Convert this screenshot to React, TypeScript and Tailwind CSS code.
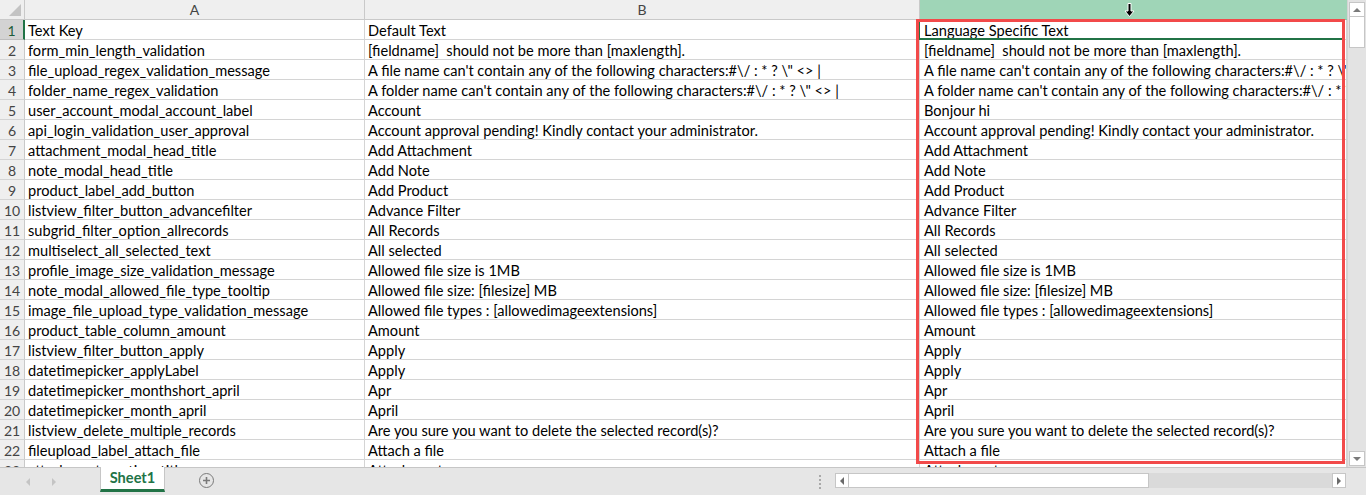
const rows: [string, string, string][] = [
  ['Text Key', 'Default Text', 'Language Specific Text'],
  ['form_min_length_validation', '[fieldname]  should not be more than [maxlength].', '[fieldname]  should not be more than [maxlength].'],
  ['file_upload_regex_validation_message', 'A file name can\'t contain any of the following characters:#\\/ : * ? \\" <> |', 'A file name can\'t contain any of the following characters:#\\/ : * ? \\" <> |'],
  ['folder_name_regex_validation', 'A folder name can\'t contain any of the following characters:#\\/ : * ? \\" <> |', 'A folder name can\'t contain any of the following characters:#\\/ : * ? \\" <> |'],
  ['user_account_modal_account_label', 'Account', 'Bonjour hi'],
  ['api_login_validation_user_approval', 'Account approval pending! Kindly contact your administrator.', 'Account approval pending! Kindly contact your administrator.'],
  ['attachment_modal_head_title', 'Add Attachment', 'Add Attachment'],
  ['note_modal_head_title', 'Add Note', 'Add Note'],
  ['product_label_add_button', 'Add Product', 'Add Product'],
  ['listview_filter_button_advancefilter', 'Advance Filter', 'Advance Filter'],
  ['subgrid_filter_option_allrecords', 'All Records', 'All Records'],
  ['multiselect_all_selected_text', 'All selected', 'All selected'],
  ['profile_image_size_validation_message', 'Allowed file size is 1MB', 'Allowed file size is 1MB'],
  ['note_modal_allowed_file_type_tooltip', 'Allowed file size: [filesize] MB', 'Allowed file size: [filesize] MB'],
  ['image_file_upload_type_validation_message', 'Allowed file types : [allowedimageextensions]', 'Allowed file types : [allowedimageextensions]'],
  ['product_table_column_amount', 'Amount', 'Amount'],
  ['listview_filter_button_apply', 'Apply', 'Apply'],
  ['datetimepicker_applyLabel', 'Apply', 'Apply'],
  ['datetimepicker_monthshort_april', 'Apr', 'Apr'],
  ['datetimepicker_month_april', 'April', 'April'],
  ['listview_delete_multiple_records', 'Are you sure you want to delete the selected record(s)?', 'Are you sure you want to delete the selected record(s)?'],
  ['fileupload_label_attach_file', 'Attach a file', 'Attach a file'],
  ['attachment_section_title', 'Attachment', 'Attachment'],
]

const cell = 'h-[20px] border-r border-b border-[#d4d4d4] pl-[3px] pr-[2px] pt-[1px] overflow-hidden whitespace-pre leading-[20px] text-black bg-white'

function ColHead({ label }: { label: string }) {
  return (
    <div className="h-[20px] flex items-center justify-center border-r border-b bg-[#efefef] border-[#c9c9c9] text-[14px] text-[#444]">
      {label}
    </div>
  )
}

export default function App() {
  return (
    <div className="w-[1366px] h-[495px] overflow-hidden flex flex-col bg-white" style={{ fontFamily: 'Lato, "Noto Sans", sans-serif' }}>
      <div className="flex h-[467px]">
        <div className="relative w-[1347px] overflow-hidden">
          <div className="grid grid-cols-[25px_340px_555px_427px] text-[14.6px]">
            <div className="relative h-[20px] bg-[#efefef] border-r border-b border-[#c9c9c9]">
              <div className="absolute right-[3px] bottom-[3px] w-0 h-0 border-l-[12px] border-l-transparent border-b-[12px] border-b-[#c3c3c3]" />
            </div>
            <ColHead label="A" />
            <ColHead label="B" />
            <div className="h-[20px] flex items-center justify-center bg-[#9fd5b7] border-b border-[#8cc2a4] text-[14px] text-[#9fd5b7]">
              C
            </div>
            {rows.map((r, i) => (
              <div key={i} className="contents">
                <div
                  className={`h-[20px] flex items-center justify-center border-b text-[14px] pt-[1px] ${
                    i === 0
                      ? 'bg-[#d3d3d3] border-[#bdbdbd] text-[#1e5d3a] border-r-2 border-r-[#217346]'
                      : 'bg-[#efefef] border-[#d4d4d4] text-[#444] border-r border-r-[#c9c9c9]'
                  }`}
                >
                  {i + 1}
                </div>
                <div className={cell}>{r[0]}</div>
                <div className={cell}>{r[1]}</div>
                <div className={`${cell} pl-[4px]`}>{r[2]}</div>
              </div>
            ))}
          </div>

          {/* mouse cursor over column C header */}
          <svg className="absolute left-[1124px] top-[3px]" width="11" height="14" viewBox="0 0 11 14">
            <path d="M4 0.5h3v7.5h3L5.5 13.5 1 8h3z" fill="#000" stroke="#fff" strokeWidth="1" />
          </svg>

          {/* active cell C1 */}
          <div className="absolute left-[918px] top-[19px] w-[426px] h-[21px] border-2 border-[#217346] pointer-events-none" />

          {/* red highlight */}
          <div className="absolute left-[916px] top-[19px] w-[429px] h-[445px] border-[3px] border-[#f24a4a] pointer-events-none" />
        </div>

        {/* vertical scrollbar */}
        <div className="w-[19px] bg-[#e3e3e3] border-l border-[#d4d4d4] flex flex-col items-center pt-[2px]">
          <div className="w-[16px] h-[15px] bg-white border border-[#c6c6c6] flex items-center justify-center">
            <div className="w-0 h-0 border-l-[4px] border-r-[4px] border-b-[4px] border-l-transparent border-r-transparent border-b-[#7a7a7a]" />
          </div>
          <div className="w-[16px] h-[31px] bg-white border border-t-0 border-[#c6c6c6]" />
          <div className="flex-1" />
          <div className="w-[16px] h-[15px] bg-white border border-[#c6c6c6] flex items-center justify-center mb-[1px]">
            <div className="w-0 h-0 border-l-[4px] border-r-[4px] border-t-[4px] border-l-transparent border-r-transparent border-t-[#7a7a7a]" />
          </div>
        </div>
      </div>

      {/* sheet tab bar */}
      <div className="h-[28px] bg-[#e6e6e6] border-t border-[#c6c6c6] flex items-start">
        <div className="w-[100px] h-full flex items-center pl-[26px] gap-[22px]">
          <div className="w-0 h-0 border-t-[4px] border-b-[4px] border-r-[4px] border-t-transparent border-b-transparent border-r-[#c4c4c4]" />
          <div className="w-0 h-0 border-t-[4px] border-b-[4px] border-l-[4px] border-t-transparent border-b-transparent border-l-[#c4c4c4]" />
        </div>
        <div className="w-[65px] h-[25px] -mt-px bg-white border-x border-[#c6c6c6] border-b-[3px] border-b-[#217346] flex items-center justify-center text-[14.6px] font-bold text-[#217346]">
          Sheet1
        </div>
        <div className="ml-[34px] mt-[5px] w-[15px] h-[15px] rounded-full border-[1.5px] border-[#7a7a7a] flex items-center justify-center">
          <svg width="9" height="9" viewBox="0 0 9 9">
            <path d="M4.5 1v7M1 4.5h7" stroke="#7a7a7a" strokeWidth="1.6" />
          </svg>
        </div>
        <div className="ml-[605px] mt-[7px] flex flex-col gap-[2px]">
          <div className="w-[2px] h-[2px] bg-[#a9a9a9]" />
          <div className="w-[2px] h-[2px] bg-[#a9a9a9]" />
          <div className="w-[2px] h-[2px] bg-[#a9a9a9]" />
          <div className="w-[2px] h-[2px] bg-[#a9a9a9]" />
        </div>
        <div className="ml-[14px] mt-[5px] flex h-[15px]">
          <div className="w-[14px] h-[15px] bg-white border border-[#c6c6c6] flex items-center justify-center">
            <div className="w-0 h-0 border-t-[4px] border-b-[4px] border-r-[4px] border-t-transparent border-b-transparent border-r-[#6a6a6a]" />
          </div>
          <div className="w-[300px] h-[15px] bg-white border-y border-r border-[#c6c6c6]" />
          <div className="w-[183px] h-[15px] bg-[#dadada]" />
          <div className="w-[14px] h-[15px] bg-white border border-[#c6c6c6] flex items-center justify-center">
            <div className="w-0 h-0 border-t-[4px] border-b-[4px] border-l-[4px] border-t-transparent border-b-transparent border-l-[#6a6a6a]" />
          </div>
        </div>
      </div>
    </div>
  )
}
